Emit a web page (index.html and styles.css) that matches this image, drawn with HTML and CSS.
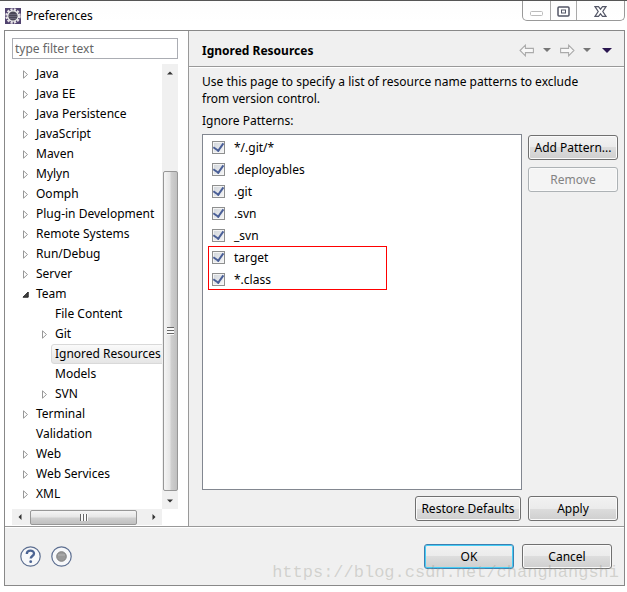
FILE: index.html
```
<!DOCTYPE html>
<html lang="en">
<head>
  <meta charset="UTF-8">
  <meta name="viewport" content="width=device-width, initial-scale=1.0">
  <title>Preferences</title>
  <link rel="stylesheet" href="styles.css">
</head>
<body>

  <!-- shared icons -->
  <svg class="sprite" aria-hidden="true">
    <symbol id="closed" viewBox="0 0 7 9"><path d="M1.5 .8v7.4l4-3.7z" fill="#fff" stroke="#989898"/></symbol>
    <symbol id="open" viewBox="0 0 7 7"><path d="M6.200 1v5.200H1z" fill="#404040" stroke="#262626"/></symbol>
    <symbol id="down" viewBox="0 0 8 4"><path d="M0 0h8L4 4z" fill="currentColor"/></symbol>
    <symbol id="arrow" viewBox="0 0 15 12"><path d="M1 6l5-5v3h7.500v4H6v3z" fill="#f8f8f8" stroke="#aaa"/></symbol>
  </svg>

  <div class="window">
    <header class="titlebar">
      <svg class="logo" viewBox="0 0 16 16">
        <rect width="16" height="16" fill="#51436f"/>
        <circle cx="8" cy="8" r="6.400" fill="none" stroke="#e6e2e6" stroke-width="2.600" stroke-dasharray="2.200 1.150"/>
        <circle cx="8" cy="8" r="5.200" fill="#4a4656" stroke="#eee" stroke-width="1.200"/>
        <path d="M4 6.500h8M3.500 8.500h9M4.500 10.500h7" stroke="#777385" stroke-width=".7"/>
      </svg>
      <h1>Preferences</h1>
      <div class="controls">
        <button class="min" aria-label="Minimize" disabled>
          <svg width="13" height="5"><rect x=".5" y=".5" width="12" height="4" rx="1" fill="#fff" stroke="#bbb"/></svg>
        </button>
        <button class="max" aria-label="Maximize">
          <svg width="13" height="11"><rect x="1" y="1" width="11" height="9" rx="1" fill="#fff" stroke="#535666" stroke-width="1.500"/><rect x="4.500" y="4" width="4" height="3" fill="#fff" stroke="#535666"/></svg>
        </button>
        <button class="close" aria-label="Close">
          <svg width="13" height="11"><path d="M1 .7h3.500l2 2.500 2-2.500H12L8.800 5.500 12 10.300H8.500l-2-2.500-2 2.500H1l3.200-4.800z" fill="#fff" stroke="#535666" stroke-width="1.200"/></svg>
        </button>
      </div>
    </header>

    <div class="frame">
      <div class="panes">
        <nav class="sidebar">
          <input class="filter" type="text" placeholder="type filter text" aria-label="Filter">
          <div class="tree-box">
            <ul class="tree">
              <li><svg><use href="#closed"/></svg><span>Java</span></li>
              <li><svg><use href="#closed"/></svg><span>Java EE</span></li>
              <li><svg><use href="#closed"/></svg><span>Java Persistence</span></li>
              <li><svg><use href="#closed"/></svg><span>JavaScript</span></li>
              <li><svg><use href="#closed"/></svg><span>Maven</span></li>
              <li><svg><use href="#closed"/></svg><span>Mylyn</span></li>
              <li><svg><use href="#closed"/></svg><span>Oomph</span></li>
              <li><svg><use href="#closed"/></svg><span>Plug-in Development</span></li>
              <li><svg><use href="#closed"/></svg><span>Remote Systems</span></li>
              <li><svg><use href="#closed"/></svg><span>Run/Debug</span></li>
              <li><svg><use href="#closed"/></svg><span>Server</span></li>
              <li><svg><use href="#open"/></svg><span>Team</span></li>
              <li class="child leaf"><span>File Content</span></li>
              <li class="child"><svg><use href="#closed"/></svg><span>Git</span></li>
              <li class="child leaf"><span class="selected">Ignored Resources</span></li>
              <li class="child leaf"><span>Models</span></li>
              <li class="child"><svg><use href="#closed"/></svg><span>SVN</span></li>
              <li><svg><use href="#closed"/></svg><span>Terminal</span></li>
              <li class="leaf"><span>Validation</span></li>
              <li><svg><use href="#closed"/></svg><span>Web</span></li>
              <li><svg><use href="#closed"/></svg><span>Web Services</span></li>
              <li><svg><use href="#closed"/></svg><span>XML</span></li>
            </ul>
            <div class="scroll vertical">
              <svg class="up"><use href="#down"/></svg>
              <div class="track"><div class="thumb"><i class="grip"></i></div></div>
              <svg><use href="#down"/></svg>
            </div>
            <div class="scroll horizontal">
              <svg class="left"><use href="#down"/></svg>
              <div class="track"><div class="thumb"><i class="grip"></i></div></div>
              <svg class="right"><use href="#down"/></svg>
            </div>
          </div>
        </nav>

        <main class="page">
          <div class="page-head">
            <h2>Ignored Resources</h2>
            <div class="history">
              <button aria-label="Back"><svg class="arrow"><use href="#arrow"/></svg></button>
              <button aria-label="Back history"><svg><use href="#down"/></svg></button>
              <button aria-label="Forward"><svg class="arrow forward"><use href="#arrow"/></svg></button>
              <button aria-label="Forward history"><svg><use href="#down"/></svg></button>
              <button class="menu" aria-label="Menu"><svg><use href="#down"/></svg></button>
            </div>
          </div>

          <div class="page-body">
            <p>Use this page to specify a list of resource name patterns to exclude from version control.</p>
            <h3>Ignore Patterns:</h3>
            <div class="editor">
              <div class="patterns">
                <label><input type="checkbox" checked>*/.git/*</label>
                <label><input type="checkbox" checked>.deployables</label>
                <label><input type="checkbox" checked>.git</label>
                <label><input type="checkbox" checked>.svn</label>
                <label><input type="checkbox" checked>_svn</label>
                <div class="marked">
                  <label><input type="checkbox" checked>target</label>
                  <label><input type="checkbox" checked>*.class</label>
                </div>
              </div>
              <div class="side-buttons">
                <button class="btn">Add Pattern...</button>
                <button class="btn" disabled>Remove</button>
              </div>
            </div>
            <div class="page-buttons">
              <button class="btn restore">Restore Defaults</button>
              <button class="btn">Apply</button>
            </div>
          </div>
        </main>
      </div>

      <footer class="bottom">
        <button class="round" aria-label="Help">
          <svg viewBox="0 0 21 21"><circle cx="10.500" cy="10.500" r="9.700" fill="#f7f8fa" stroke="#5d6f91" stroke-width="1.200"/><path d="M6.800 8c0-4.600 7.400-4.300 7.200-.4-.1 2.400-3.300 2.500-3.300 5" fill="none" stroke="#4b6392" stroke-width="2.300"/><circle cx="10.700" cy="15.700" r="1.400" fill="#4b6392"/></svg>
        </button>
        <button class="round" aria-label="Record">
          <svg viewBox="0 0 21 21"><circle cx="10.500" cy="10.500" r="9.700" fill="#f7f8fa" stroke="#5d6f91" stroke-width="1.200"/><circle cx="10.500" cy="10.500" r="4.800" fill="#999" stroke="#808080"/><path d="M7 9h7" stroke="#b4b4b4"/></svg>
        </button>
        <button class="btn ok">OK</button>
        <button class="btn">Cancel</button>
        <span class="watermark">https://blog.csdn.net/changhangshi</span>
      </footer>
    </div>
  </div>

</body>
</html>
```

FILE: styles.css
```
* {
  box-sizing: border-box;
}

body {
  margin: 0;
  font-family: "Noto Sans", "Open Sans", sans-serif;
  font-size: 12px;
  line-height: 17px;
  color: #000;
  background: #fff;
}

h1, h2, h3, p, ul {
  margin: 0;
  padding: 0;
  font-size: inherit;
  font-weight: normal;
}

button, input {
  font: inherit;
  color: inherit;
}

button {
  padding: 0;
  border: none;
  background: none;
}

svg {
  display: block;
  flex: none;
}

.sprite {
  position: absolute;
  width: 0;
  height: 0;
}

.window {
  display: flex;
  flex-direction: column;
  min-height: 100vh;
  padding: 0 2px 6px 4px;
  border-top: 1px solid #555;
  background: linear-gradient(#fdfdfd, #fff 20px);
}

/* title bar */
.titlebar {
  display: flex;
  align-items: center;
  height: 29px;
  padding-left: 1px;
}

.logo {
  width: 16px;
  height: 16px;
  margin-right: 5px;
}

.controls {
  display: flex;
  align-self: flex-start;
  height: 20px;
  margin-left: auto;
  border: 1px solid #999;
  border-top: none;
  border-radius: 0 0 5px 5px;
}

.controls button {
  display: flex;
  align-items: center;
  justify-content: center;
  width: 27px;
  padding-top: 1px;
}

.controls .min {
  padding-top: 5px;
}

.controls .max {
  border: solid #aaa;
  border-width: 0 1px;
}

.controls .close {
  width: 47px;
}

/* frame */
.frame {
  display: flex;
  flex: 1;
  flex-direction: column;
  border: 1px solid #888;
  background: #f0f0f0;
}

.panes {
  display: flex;
  flex: 1;
}

.sidebar {
  display: flex;
  flex: none;
  flex-direction: column;
  width: 184px;
  padding: 7px 10px 1px 7px;
  border-right: 1px solid #999;
  background: #fff;
}

.filter {
  width: 100%;
  height: 21px;
  margin-bottom: 5px;
  padding: 0 2px;
  border: 1px solid #abadb3;
  background: #fff;
}

.filter::placeholder {
  color: #666;
}

.tree-box {
  display: grid;
  flex: 1;
  grid-template-columns: 1fr 16px;
  grid-template-rows: 1fr 16px;
}

.tree {
  overflow: hidden;
  padding-right: 1px;
  list-style: none;
}

.tree li {
  display: flex;
  align-items: center;
  height: 20px;
  padding-left: 10px;
  white-space: nowrap;
}

.tree svg {
  width: 7px;
  height: 9px;
}

.tree span {
  height: 20px;
  margin-left: 3px;
  padding: 0 3px;
  border: 1px solid transparent;
}

.tree .child {
  padding-left: 29px;
}

.tree .leaf {
  padding-left: 17px;
}

.tree .child.leaf {
  padding-left: 36px;
}

.tree .selected {
  border-color: #d9d9d9;
  border-radius: 3px;
  background: linear-gradient(#fafafa, #e5e5e5);
}

/* scrollbars */
.scroll {
  display: flex;
  align-items: center;
  justify-content: space-between;
  background: #f0f0f0;
  color: #333;
}

.scroll svg {
  width: 6px;
  height: 4px;
}

.scroll .track {
  display: flex;
  flex: 1;
}

.scroll .thumb {
  display: flex;
  align-items: center;
  justify-content: center;
  border: 1px solid #979797;
  border-radius: 2px;
}

.vertical {
  flex-direction: column;
  padding: 7px 0 6px;
}

.vertical .track {
  align-items: flex-end;
  width: 15px;
  margin: 6px 0 8px;
}

.vertical .thumb {
  width: 100%;
  height: 78%;
  background: linear-gradient(to right, #f5f5f5, #e6e6e6 45%, #cfcfcf 55%, #c0c0c0);
}

.vertical .grip {
  width: 7px;
  height: 8px;
  background: repeating-linear-gradient(#666 0 1px, #fafafa 1px 3px);
}

.vertical .up {
  transform: rotate(180deg);
}

.horizontal {
  padding: 0 5px;
}

.horizontal .track {
  height: 15px;
  margin: 0 7px;
}

.horizontal .thumb {
  width: 94%;
  height: 100%;
  background: linear-gradient(#f5f5f5, #e6e6e6 45%, #cfcfcf 55%, #c0c0c0);
}

.horizontal .grip {
  width: 8px;
  height: 7px;
  background: repeating-linear-gradient(to right, #666 0 1px, #fafafa 1px 3px);
}

.horizontal .left {
  transform: rotate(90deg);
}

.horizontal .right {
  transform: rotate(-90deg);
}

/* page */
.page {
  display: flex;
  flex: 1;
  flex-direction: column;
  min-width: 0;
}

.page-head {
  display: flex;
  align-items: center;
  justify-content: space-between;
  height: 36px;
  padding: 3px 12px 0 13px;
  border-bottom: 1px solid #999;
  box-shadow: 0 1px #fff;
}

.page-head h2 {
  font-weight: bold;
}

.history {
  display: flex;
  align-items: center;
  gap: 8px;
  color: #777;
}

.history svg {
  width: 8px;
  height: 4px;
}

.history .arrow {
  width: 16px;
  height: 13px;
}

.history .forward {
  transform: scaleX(-1);
}

.history .menu {
  margin-left: 3px;
  color: #2a1650;
}

.history .menu svg {
  width: 10px;
  height: 5px;
}

.page-body {
  display: flex;
  flex: 1;
  flex-direction: column;
  padding: 6px 6px 5px 13px;
}

.page-body p {
  padding-right: 16px;
}

.page-body h3 {
  margin: 5px 0;
}

.editor {
  display: flex;
  flex: 1;
  gap: 6px;
}

.patterns {
  flex: 1;
  padding: 1px 5px;
  border: 1px solid #828790;
  background: #fff;
}

.patterns label {
  display: flex;
  align-items: center;
  height: 22px;
  padding-left: 4px;
}

.patterns input {
  display: flex;
  align-items: center;
  justify-content: center;
  width: 13px;
  height: 13px;
  margin: 0 9px 0 0;
  border: 1px solid #8e8f8f;
  background: linear-gradient(135deg, #cfd4da, #f6f6f6);
  box-shadow: inset 0 0 0 1px #f4f4f4;
  appearance: none;
}

.patterns input:checked::after {
  content: "";
  width: 5px;
  height: 8px;
  margin-bottom: 2px;
  border: solid #4a5f97;
  border-width: 0 2px 2px 0;
  transform: rotate(35deg);
}

.marked {
  width: 179px;
  outline: 1px solid #f00;
  outline-offset: -1px;
}

.side-buttons {
  display: flex;
  flex-direction: column;
  gap: 7px;
  padding-top: 1px;
}

.page-buttons {
  display: flex;
  justify-content: flex-end;
  gap: 7px;
  padding-top: 6px;
}

.btn {
  width: 90px;
  height: 25px;
  border: 1px solid #707070;
  border-radius: 3px;
  background: linear-gradient(#f2f2f2, #ebebeb 50%, #dddddd 50%, #cfcfcf);
  box-shadow: inset 0 0 0 1px #fafafa;
  white-space: nowrap;
}

.btn:disabled {
  border-color: #adb2b5;
  background: #f4f4f4;
  color: #838383;
}

.btn.restore {
  width: 106px;
}

.btn.ok {
  margin-left: auto;
  border-color: #3c7fb1;
  box-shadow: inset 0 0 0 1px #46cdf5;
}

/* bottom bar */
.bottom {
  position: relative;
  display: flex;
  align-items: center;
  gap: 8px;
  height: 59px;
  padding: 0 12px 0 15px;
  border-top: 1px solid #999;
  box-shadow: inset 0 1px #fff;
}

.round {
  margin-right: 2px;
}

.round svg {
  width: 21px;
  height: 21px;
}

.watermark {
  position: absolute;
  right: 5px;
  bottom: 2px;
  font-family: "Liberation Mono", monospace;
  font-size: 17px;
  line-height: 20px;
  color: rgba(150, 150, 140, 0.35);
  pointer-events: none;
}
```
